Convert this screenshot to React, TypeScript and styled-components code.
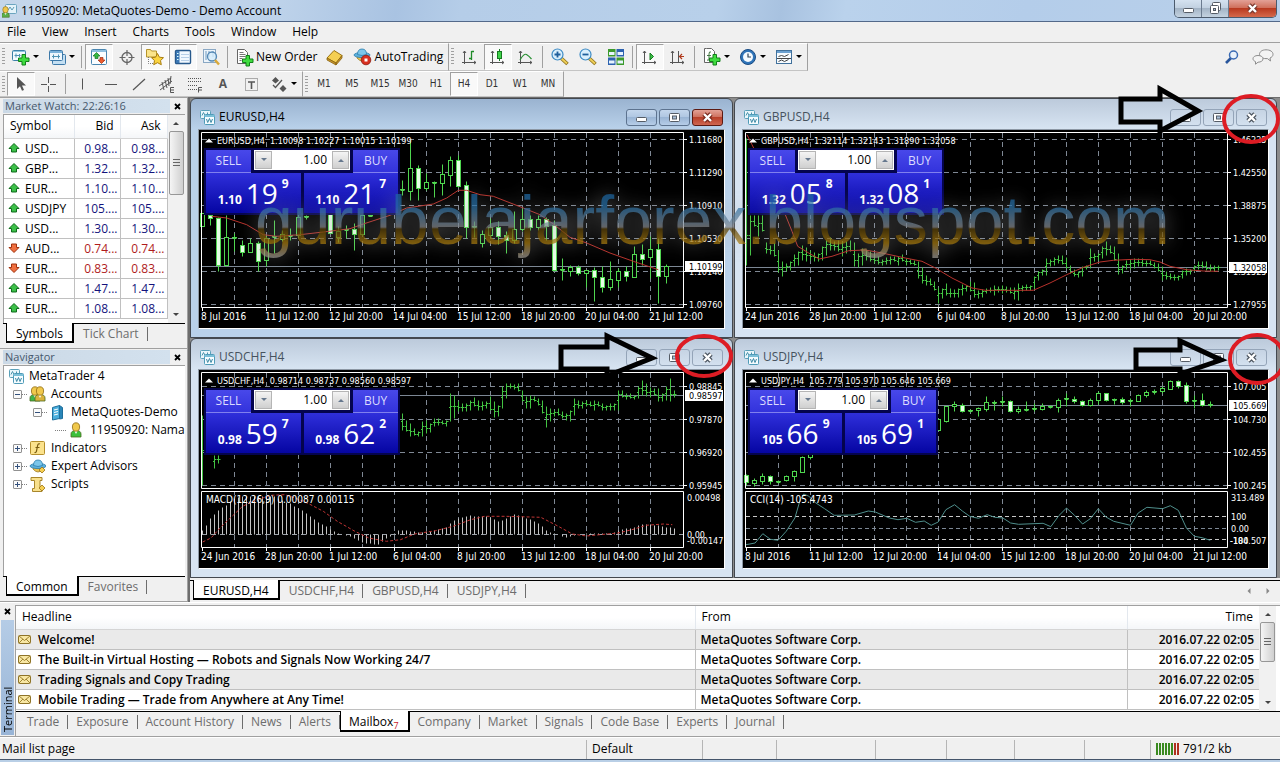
import React from "react";
import styled, { createGlobalStyle, css } from "styled-components";

const ui = `"Open Sans", "Noto Sans", sans-serif`;
const small = `"DejaVu Sans Condensed", "DejaVu Sans", sans-serif`;

const GlobalStyle = createGlobalStyle`
  * { box-sizing: border-box; }
  body { margin: 0; background: #f0f0f0; font: 12px/16px ${ui}; color: #000; }
  button, input { font: inherit; color: inherit; margin: 0; padding: 0; border: 0; background: none; }
  ul { list-style: none; margin: 0; padding: 0; }
  table { border-collapse: collapse; border-spacing: 0; }
  svg { display: block; flex: none; }
`;

/* ---------- frame ---------- */

const Shell = styled.div`
  display: flex;
  flex-direction: column;
  min-height: 100vh;
  position: relative;
  overflow: hidden;
`;

const TitleBar = styled.header`
  display: flex;
  align-items: flex-start;
  height: 22px;
  padding: 0 3px 0 2px;
  border-bottom: 1px solid #53698a;
  background: linear-gradient(100deg, #c4d6ea 0%, #bdd2ea 22%, #a9c3e2 31%, #b5cde8 36%, #b8d0ea 56%, #a8c2e0 61%, #bad2ec 66%, #b4cdea 80%, #b9d0ea 100%);
`;

const AppTitle = styled.h1`
  flex: 1;
  margin: 0 0 0 4px;
  font-size: 12px;
  font-weight: 400;
  line-height: 22px;
`;

const WindowButtons = styled.div`
  display: flex;
  border: 1px solid #4b5a6c;
  border-top: 0;
  border-radius: 0 0 5px 5px;
  overflow: hidden;
`;

const WindowButton = styled.button<{ $close?: boolean }>`
  display: grid;
  place-items: center;
  width: ${(p) => (p.$close ? 47 : 27)}px;
  height: 17px;
  border-right: ${(p) => (p.$close ? 0 : 1)}px solid #6b7b8f;
  background: ${(p) =>
    p.$close
      ? "linear-gradient(#e3a196, #d0705c 45%, #b93a20 50%, #d5694c)"
      : "linear-gradient(#d5e2f0, #c2d1e1 45%, #a3b4c6 50%, #c4d2e0)"};
`;

const MenuBar = styled.nav`
  height: 21px;
  border-bottom: 1px solid #a0a0a0;
  ul { display: flex; padding-left: 7px; gap: 16px; }
  button { line-height: 20px; }
`;

/* ---------- toolbars ---------- */

const Toolbar = styled.div<{ $last?: boolean }>`
  display: flex;
  height: ${(p) => (p.$last ? 26 : 28)}px;
`;

const ToolGroup = styled.div`
  display: flex;
  align-items: stretch;
  padding-right: 1px;
  border-right: 1px solid #a0a0a0;
  border-top: 1px solid #fff;
  border-bottom: 1px solid #c4c4c4;
`;

const Grip = styled.span`
  width: 3px;
  margin: 4px 2px 4px 2px;
  background: repeating-linear-gradient(#a0a0a0 0 1px, transparent 1px 3px);
`;

const Divider = styled.span`
  width: 1px;
  margin: 2px 3px 2px 2px;
  background: #a0a0a0;
`;

const ToolButton = styled.button<{ $on?: boolean; $wide?: boolean; $text?: boolean }>`
  display: flex;
  align-items: center;
  justify-content: center;
  gap: ${(p) => (p.$text ? 1 : 2)}px;
  width: ${(p) => (p.$text ? "auto" : p.$wide ? "36px" : "28px")};
  padding: 0 ${(p) => (p.$text ? 3 : 0)}px;
  border: 1px solid transparent;
  white-space: nowrap;
  ${(p) =>
    p.$on &&
    css`
      border-color: #a0a0a0 #fff #fff #a0a0a0;
      background: #f9f9f9;
    `}
`;

const FrameButton = styled(ToolButton)`
  color: #333;
  font: 10px/14px ${small};
`;

const LetterButton = styled(ToolButton)`
  color: #555;
  font-weight: 700;
`;

const Tray = styled.div`
  display: flex;
  align-items: center;
  gap: 12px;
  margin-left: auto;
  padding-right: 6px;
`;

/* ---------- docks ---------- */

const Body = styled.div`
  display: flex;
  height: 505px;
`;

const Dock = styled.aside`
  display: flex;
  flex-direction: column;
  width: 188px;
  flex: none;
  border-top: 1px solid #a0a0a0;
`;

const Panel = styled.section<{ $fill?: boolean }>`
  display: flex;
  flex-direction: column;
  padding: 1px 2px 3px 3px;
  border-bottom: 1px solid #a0a0a0;
  border-right: 1px solid #a0a0a0;
  height: ${(p) => (p.$fill ? "auto" : "251px")};
  flex: ${(p) => (p.$fill ? 1 : "none")};
  min-height: 0;
`;

const PanelTitle = styled.div`
  display: flex;
  justify-content: space-between;
  align-items: center;
  height: 14px;
  margin-bottom: 1px;
  color: #46586c;
  h2 {
    flex: 1;
    margin: 0;
    padding-left: 2px;
    font-size: 11px;
    font-weight: 400;
    line-height: 14px;
    background: linear-gradient(90deg, #cbd9e6, #d3e1ee);
  }
  button { width: 15px; height: 12px; display: grid; place-items: center; }
`;

const PanelBody = styled.div`
  display: flex;
  flex: 1;
  min-height: 0;
  overflow: hidden;
  background: #fff;
  border-left: 1px solid #a0a0a0;
  border-top: 1px solid #a0a0a0;
`;

const Quotes = styled.table`
  flex: none;
  align-self: flex-start;
  table-layout: fixed;
  width: 163px;
  th {
    height: 23px;
    padding: 0 6px;
    font-weight: 400;
    text-align: right;
    border-bottom: 1px solid #d5d5d5;
    border-right: 1px solid #e3e8ee;
    background: linear-gradient(#fff 50%, #f4f6f8);
  }
  th:first-child { text-align: left; }
  td {
    height: 20px;
    padding: 0 2px;
    text-align: right;
    border-bottom: 1px solid #c0c0c0;
    border-right: 1px solid #c0c0c0;
    line-height: 19px;
  }
  td:first-child { text-align: left; padding-left: 4px; }
  td:first-child span { display: flex; align-items: center; gap: 5px; }
`;

const QuoteRow = styled.tr<{ $up: boolean }>`
  td:not(:first-child) { color: ${(p) => (p.$up ? "#13137c" : "#b01c1c")}; }
`;

const ScrollTrack = styled.div`
  display: flex;
  flex-direction: column;
  align-items: center;
  width: 17px;
  flex: none;
  padding: 5px 0;
  background: #f1f1f1;
`;

const Thumb = styled.div<{ $h: number }>`
  display: grid;
  place-items: center;
  width: 15px;
  height: ${(p) => p.$h}px;
  margin: 5px 0 auto;
  border: 1px solid #979797;
  border-radius: 2px;
  background: linear-gradient(90deg, #f5f5f5, #e2e2e2 50%, #cfcfcf);
`;

const TabStrip = styled.div<{ $tight?: boolean }>`
  display: flex;
  align-items: flex-start;
  height: 22px;
  padding-left: 3px;
  border-top: 1px solid #000;
  background: #f0f0f0;
  --tab-pad: ${(p) => (p.$tight ? 8 : 9)}px;
`;

const Tab = styled.button<{ $on?: boolean }>`
  padding: ${(p) => (p.$on ? 3 : 2)}px 9px ${(p) => (p.$on ? 0 : 2)}px var(--tab-pad);
  margin-top: ${(p) => (p.$on ? -1 : 0)}px;
  line-height: 15px;
  white-space: nowrap;
  color: ${(p) => (p.$on ? "#000" : "#6d6d6d")};
  ${(p) =>
    p.$on
      ? css`
          background: #fff;
          border: solid #000;
          border-width: 0 2px 2px 1px;
        `
      : css`
          background: linear-gradient(#6d6d6d, #6d6d6d) right 3px / 1px 14px no-repeat;
        `}
  sub { color: #c8202a; font-size: 9px; line-height: 9px; vertical-align: -3px; }
`;

const Tree = styled.ul`
  padding: 1px 0 0 5px;
  li { display: flex; align-items: center; height: 18px; white-space: nowrap; gap: 5px; }
`;

const Branch = styled.span<{ $w: number }>`
  display: flex;
  align-items: center;
  justify-content: flex-end;
  width: ${(p) => p.$w}px;
  height: 18px;
  margin-right: -3px;
  i { width: 5px; border-top: 1px dotted #808080; }
  i.long { width: 11px; }
`;

const Expander = styled.button`
  display: grid;
  place-items: center;
  width: 9px;
  height: 9px;
  border: 1px solid #919191;
  border-radius: 1px;
  background: #fafafa;
`;

/* ---------- chart windows ---------- */

const Workspace = styled.main`
  display: flex;
  flex-direction: column;
  flex: 1;
  min-width: 0;
  border-left: 2px solid #6d6d6d;
  border-top: 1px solid #6d6d6d;
  position: relative;
`;

const WindowGrid = styled.div`
  display: grid;
  grid-template-columns: 1fr 1fr;
  grid-auto-rows: 240px;
  column-gap: 1px;
  padding-right: 3px;
  margin-bottom: 2px;
  background: #8c8c8c;
`;

const ChartWindow = styled.section<{ $active?: boolean }>`
  position: relative;
  display: flex;
  flex-direction: column;
  min-width: 0;
  padding: 0 7px 8px;
  border: 1px solid #43484f;
  border-radius: 6px 6px 0 0;
  background: ${(p) =>
    p.$active ? "linear-gradient(#9ab3d0, #b9d1ea 30px)" : "linear-gradient(#bccadb, #d7e4f2 30px)"};
`;

const WindowHead = styled.div<{ $active?: boolean }>`
  display: flex;
  align-items: center;
  height: 30px;
  padding: 6px 2px 0 2px;
  color: ${(p) => (p.$active ? "#000" : "#46525e")};
  h3 { flex: 1; margin: 0 0 0 4px; font-size: 12px; font-weight: 400; }
`;

const HeadButton = styled.button<{ $tone?: "red" | "blue" }>`
  display: grid;
  place-items: center;
  width: 31px;
  height: 17px;
  margin-left: 2px;
  border: 1px solid ${(p) => (p.$tone === "red" ? "#5c1a12" : p.$tone ? "#5d738f" : "#94a4b8")};
  border-radius: 3px;
  background: ${(p) =>
    p.$tone === "red"
      ? "linear-gradient(#e3a196, #cf7361 45%, #b8402a 50%, #cf6650)"
      : p.$tone
      ? "linear-gradient(#c3d6ec, #b0c7e2 45%, #9ab5d5 50%, #b6cde8)"
      : "transparent"};
`;

const Client = styled.div`
  position: relative;
  flex: 1;
  overflow: hidden;
  background: #000;
  border: 1px solid #8d98a5;
  border-right-color: #fff;
  border-bottom-color: #fff;
`;

const TradePanel = styled.div<{ $w: number }>`
  position: absolute;
  left: 5px;
  top: 18px;
  width: ${(p) => p.$w}px;
  padding: 2px;
  background: #04044e;
`;

const TradeTop = styled.div`
  display: grid;
  grid-template-columns: 45px 1fr 45px;
  gap: 3px;
`;

const Side = styled.button`
  height: 23px;
  color: #dcdcff;
  line-height: 20px;
  border-bottom: 1px solid #8080ee;
  background: linear-gradient(#4848ea, #3333dc);
`;

const Volume = styled.div`
  display: grid;
  grid-template-columns: 19px 1fr 19px;
  height: 20px;
  background: #fff;
  button { display: grid; place-items: center; margin: 1px; background: linear-gradient(#f4f4f4, #cfcfcf); border: 1px solid #b5b5b5; }
  input { width: 100%; text-align: right; padding-right: 4px; font-size: 12px; outline: 0; }
`;

const Prices = styled.div`
  display: grid;
  grid-template-columns: 1fr 1fr;
  gap: 3px;
`;

const Price = styled.button`
  display: flex;
  justify-content: center;
  align-items: baseline;
  gap: 4px;
  height: 40px;
  color: #fff;
  font-size: 12px;
  line-height: 40px;
  background: linear-gradient(#2f2fdb, #0505a2);
  strong { font-size: 28px; font-weight: 400; }
  sup { font-size: 12px; font-weight: 700; line-height: 1; align-self: flex-start; padding-top: 5px; }
  b { font-weight: 700; }
`;

const Callout = styled.svg`
  position: absolute;
  z-index: 3;
  right: 0;
  top: 0;
  overflow: visible;
  pointer-events: none;
`;

const Watermark = styled.div`
  position: absolute;
  z-index: 2;
  left: 65px;
  top: 84px;
  font: 68px/76px "Liberation Sans", Arial, sans-serif;
  color: transparent;
  background: linear-gradient(#1f66a0 10px, #2d72a6 24px, #7c8792 43px, #85868a 45px, #5a430c 47px, #a87c12 61px, #9c8450 67px, #9a968e 75px);
  background-clip: text;
  -webkit-background-clip: text;
  opacity: 0.74;
  filter: drop-shadow(0 0 10px rgba(170, 170, 170, 0.75));
  pointer-events: none;
  white-space: nowrap;
`;

const ScrollArrows = styled.div`
  display: flex;
  gap: 13px;
  margin: 7px 9px 0 auto;
`;

/* ---------- terminal ---------- */

const Terminal = styled.section`
  display: flex;
  height: 135px;
  border-top: 1px solid #fff;
  border-bottom: 1px solid #a0a0a0;
`;

const TerminalSide = styled.div`
  display: flex;
  flex-direction: column;
  width: 15px;
  flex: none;
  padding: 2px 1px 1px;
  button { height: 12px; margin-bottom: 3px; display: grid; place-items: center; }
  h2 {
    flex: 1;
    width: 13px;
    margin: 0;
    padding-top: 3px;
    font-size: 11px;
    font-weight: 400;
    line-height: 13px;
    writing-mode: vertical-rl;
    transform: rotate(180deg);
    background: linear-gradient(#98b4d6, #b5cce6);
  }
`;

const TerminalMain = styled.div`
  flex: 1;
  min-width: 0;
  display: flex;
  flex-direction: column;
  margin-top: 2px;
  border-left: 1px solid #a0a0a0;
  border-top: 1px solid #a0a0a0;
`;

const MailArea = styled.div`
  display: flex;
  height: 105px;
  padding-right: 4px;
  background: #fff;
  overflow: hidden;
`;

const Mail = styled.table`
  flex: 1;
  align-self: flex-start;
  table-layout: fixed;
  width: 100%;
  th {
    height: 23px;
    padding: 0 6px;
    text-align: left;
    font-weight: 400;
    border-bottom: 1px solid #d5d5d5;
    border-right: 1px solid #e3e8ee;
    background: linear-gradient(#fff 50%, #f4f6f8);
  }
  td {
    height: 20px;
    padding: 0 5px;
    font-weight: 600;
    line-height: 19px;
    border-bottom: 1px solid #c0c0c0;
    border-right: 1px solid #c0c0c0;
    white-space: nowrap;
  }
  td:first-child { padding-left: 2px; }
  td span { display: flex; align-items: center; gap: 7px; }
  th:last-child, td:last-child { text-align: right; border-right: 0; }
  tbody tr:nth-child(odd) { background: #eaeaea; }
`;

const Status = styled.footer`
  display: flex;
  align-items: center;
  height: 25px;
  border-top: 1px solid #fff;
  border-bottom: 2px solid #b9cfe6;
  box-shadow: inset 0 -1px #44546a;
`;

const StatusCell = styled.span<{ $w?: number }>`
  display: flex;
  align-items: center;
  gap: 3px;
  height: 19px;
  width: ${(p) => (p.$w ? p.$w + "px" : "auto")};
  flex: ${(p) => (p.$w ? "none" : 1)};
  padding-left: 5px;
  white-space: nowrap;
  & + & { border-left: 1px solid #b5b5b5; }
  &:first-child { padding-left: 2px; }
`;

/* ---------- glyphs ---------- */

const Caret = ({ dir = "down", fill = "#000" }: { dir?: string; fill?: string }) => {
  const d: Record<string, string> = {
    down: "M0 1h6L3 4z",
    up: "M0 5h6L3 2z",
    left: "M4.500 0v6L1.500 3z",
    right: "M1.500 0v6L4.500 3z",
  };
  return (
    <svg width="6" height="6" viewBox="0 0 6 6">
      <path d={d[dir]} fill={fill} />
    </svg>
  );
};

const Cross = () => (
  <svg width="7" height="7" viewBox="0 0 7 7">
    <path d="M1 1l5 5M6 1L1 6" stroke="#000" strokeWidth="1.8" />
  </svg>
);

const MinGlyph = () => (
  <svg width="13" height="11" viewBox="0 0 13 11">
    <rect x="1.500" y="5.500" width="10" height="4" rx="1" fill="#fff" stroke="#555c66" />
  </svg>
);
const MaxGlyph = () => (
  <svg width="13" height="11" viewBox="0 0 13 11">
    <rect x="1.500" y="1.500" width="10" height="8" rx="1" fill="#fff" stroke="#555c66" />
    <rect x="4.500" y="4" width="4" height="3" fill="#a9bfd8" stroke="#555c66" />
  </svg>
);
const RestoreGlyph = () => (
  <svg width="13" height="13" viewBox="0 0 13 13">
    <rect x="3.500" y=".5" width="8" height="8" rx="1" fill="#fff" stroke="#555c66" />
    <rect x="1.500" y="3.500" width="8" height="8" rx="1" fill="#fff" stroke="#555c66" />
    <rect x="4.500" y="6.500" width="2" height="2" fill="#a9bfd8" stroke="#555c66" />
  </svg>
);
const CloseGlyph = ({ edge = "#4c5560" }: { edge?: string }) => (
  <svg width="13" height="11" viewBox="0 0 13 11">
    <path d="M3 2l7 7M10 2l-7 7" stroke={edge} strokeWidth="4.600" />
    <path d="M3 2l7 7M10 2l-7 7" stroke="#fff" strokeWidth="2.400" />
  </svg>
);

const ChartIcon = () => (
  <svg width="15" height="15" viewBox="0 0 15 15">
    <rect x=".5" y=".5" width="10" height="8" rx="1" fill="#e9f6fb" stroke="#5aa0b8" />
    <path d="M2 5.500l1.500-3 1.500 3M7.500 2.500v3" stroke="#4a93ab" fill="none" />
    <rect x="4.500" y="4.500" width="10" height="10" rx="1" fill="#f5fcff" stroke="#4f9bb8" />
    <path d="M4.500 6h10" stroke="#7cc0d8" strokeWidth="2" />
    <path d="M6.500 9l1.200 3.500L9.500 8.500l1.500 4L12.500 9" stroke="#3d89a5" fill="none" />
  </svg>
);

const I = ({ children }: { children: React.ReactNode }) => (
  <svg width="20" height="20" viewBox="0 0 20 20" fill="none">
    {children}
  </svg>
);

const Plus = ({ x, y }: { x: number; y: number }) => (
  <path
    transform={`translate(${x} ${y})`}
    d="M4 .5h3.500V4H11v3.500H7.500V11H4V7.500H.5V4H4z"
    fill="#3fdc3f"
    stroke="#12801a"
  />
);

const Person = ({ c = "#3fb54a", x = 0 }: { c?: string; x?: number }) => (
  <g transform={`translate(${x} 0)`}>
    <path d="M1 15v-3q0-3.500 5-3.500T11 12v3z" fill={c} stroke="#4a6b1e" strokeWidth=".8" />
    <path d="M4.500 9l1.500 3 1.500-3z" fill="#fff" />
    <ellipse cx="6" cy="5" rx="3.600" ry="4.200" fill="#f0c84c" stroke="#8d6a14" strokeWidth=".8" />
  </g>
);

const Advisor = () => (
  <>
    <path d="M4 11q5 6 10 0v-2H4z" fill="#e9c251" stroke="#a07a1c" strokeWidth=".8" />
    <ellipse cx="9" cy="8" rx="8" ry="2.600" fill="#5db0dc" stroke="#2b7dac" strokeWidth=".8" />
    <path d="M4.500 7.500q0-5.500 4.500-5.500T13.500 7.500q-4.500 2-9 0z" fill="#7cc6ea" stroke="#2b7dac" strokeWidth=".8" />
  </>
);

const Lens = ({ minus }: { minus?: boolean }) => (
  <I>
    <path d="M11 11l6.500 6" stroke="#8f741e" strokeWidth="3.600" />
    <path d="M11.500 11.500l5.500 5" stroke="#f0cf58" strokeWidth="1.800" />
    <circle cx="7.500" cy="7.500" r="5.500" fill="#d8eefc" stroke="#3c8ac4" strokeWidth="1.200" />
    <path d={minus ? "M4.500 7.500h6" : "M4.500 7.500h6M7.500 4.500v6"} stroke="#1f5f9c" strokeWidth="1.800" />
  </I>
);

const Axes = ({ children }: { children?: React.ReactNode }) => (
  <I>
    <path d="M4.500 4v13M2 15.500h14M3 6l1.500-2L6 6M14 14l2 1.500-2 1.500" stroke="#555" />
    {children}
  </I>
);

const icons = {
  newChart: (
    <I>
      <rect x="1.500" y="3.500" width="13" height="10" rx="1" fill="#f2faff" stroke="#3c80a8" />
      <path d="M2 4.500h12" stroke="#8fc4de" />
      <path d="M3.500 8.500h6M5 6.500v4M8.500 7v3" stroke="#4f93b4" />
      <Plus x={7} y={7} />
    </I>
  ),
  profiles: (
    <I>
      <rect x="5.500" y="7.500" width="13" height="10" rx="1" fill="#c4dff2" stroke="#3c78a8" />
      <rect x="2.500" y="3.500" width="13" height="10" rx="1" fill="#eef7fd" stroke="#3c78a8" />
      <path d="M3 5h12" stroke="#7ab2da" strokeWidth="2" />
      <path d="M5 9.500h8M6.500 7.500v4M11.500 7.500v4" stroke="#4f93b4" />
    </I>
  ),
  market: (
    <I>
      <rect x="2.500" y="2.500" width="15" height="15" rx="1" fill="#fafdff" stroke="#4a86b0" />
      <path d="M3 4h14" stroke="#8fc0e0" strokeWidth="2" />
      <path d="M7.500 5.500L11 9H9v2.500H6V9H4z" fill="#33b83f" stroke="#197225" strokeWidth=".7" />
      <path d="M12.500 16.500L9 13h2v-2.500h3V13h2z" fill="#ec5c30" stroke="#9b2d10" strokeWidth=".7" />
    </I>
  ),
  target: (
    <I>
      <circle cx="10" cy="10.500" r="5" stroke="#666" strokeWidth="1.300" />
      <path d="M10 3v6M10 12v6M2.500 10.500h6M11.500 10.500h6" stroke="#666" strokeWidth="1.200" />
    </I>
  ),
  star: (
    <I>
      <path d="M1.500 2.500h4l1 1.500h5v6h-10z" fill="#fbe48a" stroke="#b5942c" />
      <path d="M3.500 10v6.500H8" stroke="#777" strokeDasharray="1 1" />
      <path d="M12.500 6.500l1.900 3.700 4.100.5-3 2.900.8 4.100-3.800-2-3.800 2 .8-4.100-3-2.900 4.100-.5z" fill="#fbd440" stroke="#a87d10" />
    </I>
  ),
  terminal: (
    <I>
      <rect x="2.500" y="3.500" width="15" height="13" rx="1" fill="#f2f9ff" stroke="#27598c" strokeWidth="1.400" />
      <path d="M3 4h3.500v12H3z" fill="#3c78b4" />
      <path d="M4 6.500h1.500M4 9.500h1.500M4 12.500h1.500" stroke="#dff" />
      <path d="M8 7.500h8M8 10.500h8M8 13.500h8" stroke="#b8d0e8" />
    </I>
  ),
  tester: (
    <I>
      <rect x="2.500" y="2.500" width="12" height="13" fill="#eef5fb" stroke="#8aa8c4" />
      <path d="M5 4v9M8 4v6M12 4v6" stroke="#6d9ac0" />
      <circle cx="11" cy="9.500" r="4.500" fill="#d5ecfb" fillOpacity=".8" stroke="#5488b4" strokeWidth="1.300" />
      <path d="M14 13l4 4.500" stroke="#d9a93a" strokeWidth="2.500" />
    </I>
  ),
  order: (
    <I>
      <path d="M2.500 2.500h7l3 3v11h-10z" fill="#fff" stroke="#666" />
      <path d="M4.500 5.500h4M4.500 7.500h6M4.500 9.500h6M4.500 11.500h3M4.500 13.500h2" stroke="#777" />
      <Plus x={7} y={8} />
    </I>
  ),
  book: (
    <I>
      <path d="M2 11l7-7.500 8 5-6 7.500z" fill="#f5cf52" stroke="#9c7414" />
      <path d="M2 11v2l9 5v-2zM11 16v2l6-7V8.500z" fill="#c8952a" stroke="#8a6410" strokeWidth=".8" />
    </I>
  ),
  auto: (
    <I>
      <Advisor />
      <circle cx="13" cy="13" r="4.800" fill="#d83020" stroke="#8c1a10" strokeWidth=".8" />
      <rect x="11.500" y="11.500" width="3" height="3" fill="#fff" />
    </I>
  ),
  bars: (
    <Axes>
      <path d="M11.500 4v9M11.500 4.500H14M9 11.500h2.500" stroke="#1e8a28" strokeWidth="1.300" />
    </Axes>
  ),
  candles: (
    <Axes>
      <path d="M11.500 2v12" stroke="#167a20" />
      <rect x="9.500" y="4.500" width="4" height="7" fill="#3fd24a" stroke="#167a20" />
    </Axes>
  ),
  line: (
    <Axes>
      <path d="M4 13q4-7 6.500-5.500T15.500 12" stroke="#2a9034" strokeWidth="1.200" />
    </Axes>
  ),
  tile: (
    <I>
      <rect x="2" y="2" width="7.500" height="7.500" fill="#3c9a2c" />
      <rect x="10.500" y="2" width="7.500" height="7.500" fill="#2c62b0" />
      <rect x="2" y="10.500" width="7.500" height="7.500" fill="#2c62b0" />
      <rect x="10.500" y="10.500" width="7.500" height="7.500" fill="#3c9a2c" />
      <path d="M3 6.500h5.500M11.500 6.500h5.500M3 15h5.500M11.500 15h5.500" stroke="#e8f4ff" strokeWidth="3" />
    </I>
  ),
  scroll: (
    <Axes>
      <path d="M10 6v7l3.500-3.500z" fill="#3cc048" stroke="#167a20" />
    </Axes>
  ),
  shift: (
    <Axes>
      <path d="M10.500 4v11" stroke="#555" />
      <path d="M16 9.500h-4M14 7l-2.500 2.500L14 12" stroke="#b03a1c" strokeWidth="1.200" />
    </Axes>
  ),
  indicators: (
    <I>
      <path d="M4.500 1.500h-2v14h10v-11l-3-3z" fill="#fff" stroke="#666" />
      <path d="M9 5q-2-1-2 2v5q0 2-2 1M5 8.500h4" stroke="#447744" />
      <Plus x={7} y={7} />
    </I>
  ),
  clock: (
    <I>
      <circle cx="10" cy="10" r="7.500" fill="#2f74b8" stroke="#1a4c84" />
      <circle cx="10" cy="10" r="5" fill="#f4faff" />
      <path d="M10 6.500V10h3" stroke="#345" strokeWidth="1.200" />
    </I>
  ),
  template: (
    <I>
      <rect x="2.500" y="3.500" width="15" height="13" fill="#f6fbff" stroke="#41719c" />
      <path d="M3 5h14" stroke="#6aa0d0" strokeWidth="2" />
      <path d="M4.500 9.500l3-1 3 1 4-2M4.500 14.500l3-1.500 3 1.500 4-2M3 11.500h14" stroke="#444" />
    </I>
  ),
  cursor: (
    <I>
      <path d="M6 3v12l3-2.800 2 4.600 2-.9-2-4.500h4z" fill="#555" />
    </I>
  ),
  crosshair: (
    <I>
      <path d="M9.500 3v6M9.500 12v6M2 10.500h6M11 10.500h6" stroke="#555" />
    </I>
  ),
  vline: (
    <I>
      <path d="M9.500 4.500v11" stroke="#555" />
    </I>
  ),
  hline: (
    <I>
      <path d="M4 10.500h12" stroke="#555" />
    </I>
  ),
  trend: (
    <I>
      <path d="M4 16L16 5" stroke="#555" strokeWidth="1.200" />
    </I>
  ),
  channel: (
    <I>
      <path d="M2 12L14 4M3 16l12-9M5 8l2 8M8 6l2 8M11 4l1 8M14 2l-1 8" stroke="#555" />
      <path d="M17 13.500h-3.500v5H17M13.500 16H17" stroke="#555" />
    </I>
  ),
  fibo: (
    <I>
      <path d="M3 4.500h14M3 7.500h14M3 11.500h10M3 15.500h9" stroke="#555" strokeDasharray="1 1" />
      <path d="M17 13.500h-3.500v5M13.500 16H17" stroke="#555" />
    </I>
  ),
  label: (
    <I>
      <rect x="4.500" y="4.500" width="12" height="12" stroke="#666" strokeDasharray="1 1" />
      <path d="M7 8h7M10.500 8v7" stroke="#555" strokeWidth="1.600" />
    </I>
  ),
  arrows: (
    <I>
      <path d="M6.500 3l3.500 3.500-3.500 3L3 6.500zM14 11l3.500 3.500L14 18l-3.500-3.500z" fill="#555" />
      <path d="M4 11l2.500 2.500L13 6" stroke="#555" strokeWidth="1.300" />
    </I>
  ),
};

const SearchIcon = () => (
  <svg width="16" height="16" viewBox="0 0 16 16" fill="none">
    <path d="M2 14l5-5" stroke="#28559c" strokeWidth="2.600" />
    <circle cx="9.500" cy="6" r="4" fill="#eaf2fb" stroke="#3a6ab4" strokeWidth="1.500" />
  </svg>
);
const ChatIcon = () => (
  <svg width="22" height="16" viewBox="0 0 22 16" fill="#f4f4f4" stroke="#8c8c8c">
    <path d="M14 .8c4 0 7 1.800 7 4.500 0 1.700-1.200 3-3 3.700l.5 3-3-2.400H14c-4 0-6.500-1.800-6.500-4.300S10 .8 14 .8z" />
    <path d="M6 6.500c3 0 5 1.300 5 3.300s-2 3.400-5 3.400l-2.500 2V12.600C2 12 1 11 1 9.800c0-2 2-3.300 5-3.300z" />
  </svg>
);

const QuoteArrow = ({ up }: { up: boolean }) => (
  <svg width="12" height="12" viewBox="0 0 12 12">
    <path
      d={up ? "M6 1.500l5 5H8.500V10h-5V6.500H1z" : "M6 10.500l-5-5h2.500V2h5v3.500H11z"}
      fill={up ? "#3cc048" : "#f07040"}
      stroke={up ? "#0f6b1c" : "#a0320e"}
    />
  </svg>
);

const Envelope = () => (
  <svg width="13" height="11" viewBox="0 0 13 11">
    <rect x=".5" y="1.500" width="12" height="8" rx="1" fill="#f8e7a4" stroke="#8f7428" />
    <path d="M1 2l5.500 4.500L12 2M1 9l4-4M12 9L8 5" fill="none" stroke="#a08430" />
  </svg>
);

const Grooves = () => (
  <svg width="7" height="8" viewBox="0 0 7 8">
    <path d="M0 .5h7M0 3.500h7M0 6.500h7" stroke="#666" />
  </svg>
);

const TreeGlyph = ({ children }: { children: React.ReactNode }) => (
  <svg width="17" height="17" viewBox="0 0 17 17" fill="none">
    {children}
  </svg>
);

/* ---------- charts ---------- */

type Candle = [number, number, number, number, number]; // wick top, body top, body bottom, wick bottom, filled
type Pt = [number, number];
type Series = {
  candles?: Record<number, Candle>;
  bars?: Record<number, Pt>;
};

// Values are stored in thirds of a pixel from the window's top edge.
const py = (v: number) => Math.round(v / 3 - 32) + 0.5;
const px = (i: number, step: number) => 3.5 + i * step;

const rows = <T,>(start: number, list: T[]) => Object.fromEntries(list.map((c, i) => [start + i, c])) as Record<number, T>;

const eurusd: Record<number, Candle> = {
  ...rows<Candle>(0, [
    [345, 345, 383, 384, 0], [350, 350, 361, 380, 1], [357, 361, 500, 520, 1], [350, 417, 500, 505, 0],
    [405, 418, 424, 460, 1], [425, 441, 462, 475, 1], [420, 436, 462, 462, 0], [430, 436, 488, 518, 1],
    [410, 420, 486, 505, 0], [365, 415, 421, 465, 0], [395, 408, 424, 430, 0], [390, 410, 413, 425, 1],
    [350, 357, 412, 420, 0], [350, 354, 358, 364, 1],
  ]),
  ...rows<Candle>(16, [
    [340, 345, 404, 405, 1], [385, 398, 417, 432, 0], [380, 394, 398, 420, 1], [375, 394, 408, 455, 1],
    [345, 350, 408, 415, 0], [340, 350, 353, 354, 1],
  ]),
  ...rows<Candle>(25, [
    [245, 272, 277, 292, 1], [130, 210, 278, 305, 0], [200, 210, 269, 305, 1], [225, 252, 270, 275, 0],
    [250, 252, 257, 297, 1], [198, 228, 254, 290, 0], [175, 187, 230, 265, 0], [170, 187, 263, 268, 1],
    [250, 262, 388, 420, 1], [370, 383, 388, 418, 1], [395, 408, 436, 447, 0], [360, 388, 410, 420, 0],
    [370, 387, 413, 437, 1], [400, 412, 425, 465, 1], [340, 393, 425, 435, 0], [330, 363, 393, 398, 0],
    [350, 362, 388, 397, 1], [350, 362, 388, 397, 0], [358, 362, 383, 425, 1], [365, 381, 515, 520, 1],
    [480, 514, 520, 545, 1], [500, 506, 520, 535, 0], [500, 506, 525, 530, 1], [515, 516, 525, 568, 0],
    [508, 516, 538, 608, 1], [505, 537, 568, 583, 1], [490, 543, 567, 575, 0], [510, 520, 545, 567, 0],
    [503, 520, 535, 550, 1], [445, 468, 537, 537, 0], [437, 468, 482, 500, 1], [415, 453, 478, 540, 0],
    [420, 453, 533, 615, 1], [498, 505, 533, 555, 0],
  ]),
};

const usdjpy: Record<number, Candle> = {
  ...rows<Candle>(0, [
    [408, 412, 433, 440, 1], [420, 427, 434, 443, 0], [405, 413, 430, 437, 0], [410, 413, 430, 438, 1],
    [425, 430, 433, 435, 1], [410, 415, 425, 430, 0], [395, 400, 415, 430, 0], [355, 357, 402, 402, 0],
    [345, 348, 358, 362, 0],
  ]),
  ...rows<Candle>(24, [
    [243, 243, 275, 275, 0], [203, 205, 248, 253, 0], [190, 198, 205, 220, 0], [195, 200, 220, 223, 1],
    [213, 217, 220, 222, 1], [207, 210, 217, 235, 0], [175, 193, 213, 218, 0], [185, 192, 194, 215, 1],
    [175, 188, 191, 205, 1], [185, 188, 220, 223, 1], [205, 213, 220, 225, 0], [190, 213, 216, 220, 1],
    [195, 211, 213, 220, 1], [195, 203, 212, 217, 0], [200, 203, 208, 210, 1], [180, 185, 208, 222, 0],
    [165, 180, 183, 205, 1], [175, 182, 190, 195, 1], [185, 190, 202, 205, 1], [180, 185, 200, 203, 0],
    [158, 165, 187, 197, 0], [165, 165, 185, 190, 1], [180, 183, 186, 197, 1], [178, 183, 192, 198, 1],
    [180, 187, 192, 205, 0], [168, 170, 188, 190, 0], [155, 163, 170, 178, 0], [153, 160, 162, 168, 1],
    [145, 150, 160, 165, 0], [126, 128, 152, 153, 0], [125, 130, 143, 150, 1], [133, 142, 190, 195, 1],
    [170, 186, 190, 210, 1], [165, 187, 200, 205, 1], [190, 198, 202, 207, 1],
  ]),
};

const gbpusd = rows<Pt>(0, [
  [120, 500], [352, 470], [350, 385], [350, 415], [350, 400], [432, 465], [440, 468], [435, 475], [455, 522], [490, 533],
  [495, 520], [490, 515], [468, 505], [460, 502], [440, 485], [448, 490], [455, 485], [462, 488], [465, 488], [445, 485],
  [425, 470], [418, 455], [428, 455], [425, 460], [430, 475], [430, 465], [425, 460], [432, 505], [465, 508], [450, 500],
  [455, 485], [460, 490], [468, 495], [475, 498], [482, 500], [478, 498], [475, 497], [475, 490], [475, 500], [468, 490],
  [480, 500], [482, 498], [485, 502], [490, 540], [508, 555], [530, 562], [540, 560], [550, 575], [568, 615], [570, 600],
  [555, 590], [570, 598], [572, 598], [570, 597], [558, 590], [560, 580], [548, 578], [552, 598], [575, 600], [572, 598],
  [570, 585], [568, 582], [560, 590], [565, 582], [560, 585], [565, 583], [568, 585], [568, 602], [555, 605], [560, 578],
  [558, 575], [560, 575], [535, 570], [518, 545], [512, 530], [480, 530], [482, 505], [478, 502], [470, 495], [472, 498],
  [478, 510], [500, 525], [512, 535], [520, 538], [505, 535], [500, 512], [450, 510], [465, 490], [465, 485], [445, 480],
  [430, 470], [440, 465], [445, 485], [465, 528], [500, 525], [485, 512], [482, 512], [480, 510], [480, 505], [480, 505],
  [485, 505], [487, 500], [492, 510], [495, 520], [505, 545], [520, 542], [525, 542], [528, 545], [530, 545], [515, 540],
  [510, 530], [512, 528], [500, 520], [488, 512], [490, 510], [490, 515], [498, 520], [500, 518], [500, 515],
]);

const usdchf: Record<number, Pt> = {
  0: [230, 440],
  3: [350, 390],
  4: [350, 375],
  ...rows<Pt>(50, [
    [225, 275], [245, 280], [255, 295], [270, 290], [280, 293], [250, 293], [245, 285], [255, 282], [240, 265], [240, 262],
    [245, 258], [245, 265], [165, 250], [170, 240], [190, 218], [195, 218], [195, 218], [185, 215], [178, 205], [185, 215],
    [190, 215], [190, 210], [175, 215], [190, 238], [200, 235], [145, 210], [135, 180], [135, 150], [138, 152], [135, 160],
    [155, 190], [175, 210], [170, 210], [175, 190], [180, 200], [185, 225], [205, 268], [210, 248], [215, 235], [210, 232],
    [220, 240], [225, 245], [215, 248], [180, 230], [185, 210], [190, 210], [185, 205], [190, 205], [185, 215], [190, 205],
    [195, 215], [200, 215], [195, 215], [195, 215], [155, 215], [155, 178], [165, 182], [165, 180], [170, 182], [145, 180],
    [125, 172], [135, 175], [148, 178], [150, 170], [150, 190], [165, 190], [145, 185], [120, 188], [155, 178],
  ]),
};

const eurMa: Pt[] = [
  [65, 355], [110, 360], [170, 380], [220, 410], [260, 415], [330, 410], [400, 402], [480, 392], [520, 378], [600, 352],
  [650, 330], [730, 318], [770, 300], [805, 277], [830, 277], [870, 290], [910, 295], [1000, 330], [1050, 350], [1093, 380],
  [1140, 418], [1190, 435], [1260, 465], [1330, 490], [1405, 515],
];
const gbpMa: Pt[] = [
  [45, 110], [60, 140], [100, 220], [160, 350], [180, 400], [197, 445], [230, 465], [262, 483], [300, 475], [350, 458],
  [400, 456], [450, 465], [520, 480], [570, 490], [610, 510], [660, 540], [720, 570], [760, 577], [904, 577], [954, 555],
  [1004, 530], [1054, 508], [1104, 492], [1144, 487], [1204, 484], [1254, 485], [1284, 492], [1314, 505], [1364, 515],
  [1414, 519], [1459, 520],
];
const macdTop: Pt[] = [
  [36, 575], [47, 562], [58, 540], [81, 515], [104, 500], [127, 480], [150, 475], [240, 475], [262, 485], [285, 495],
  [310, 510], [340, 530], [365, 550], [400, 572], [415, 582], [440, 588], [455, 593], [480, 605], [500, 615], [540, 618],
  [560, 600], [580, 590], [590, 577], [620, 577], [660, 582], [700, 575], [730, 568], [745, 552], [770, 538], [800, 532],
  [850, 535], [880, 550], [900, 540], [925, 527], [950, 535], [980, 548], [1000, 560], [1020, 580], [1050, 588],
  [1075, 598], [1100, 590], [1140, 585], [1200, 585], [1225, 575], [1260, 568], [1290, 558], [1310, 558], [1340, 562],
  [1380, 570],
];
const macdSignal: Pt[] = [
  [36, 612], [60, 600], [90, 565], [115, 540], [150, 505], [180, 490], [230, 472], [270, 470], [300, 480], [340, 498],
  [380, 520], [420, 550], [470, 580], [510, 600], [560, 610], [600, 605], [640, 588], [700, 578], [750, 565], [800, 545],
  [840, 535], [900, 535], [1000, 538], [1050, 565], [1090, 588], [1130, 594], [1220, 585], [1260, 575], [1300, 562],
  [1350, 558], [1375, 560],
];
const cci: Pt[] = [
  [40, 620], [66, 615], [88, 587], [110, 604], [132, 607], [155, 580], [180, 540], [195, 485], [205, 468], [220, 475],
  [240, 495], [265, 512], [292, 532], [350, 531], [390, 519], [410, 522], [450, 540], [475, 545], [500, 541], [525, 553],
  [550, 549], [570, 562], [590, 552], [612, 515], [637, 500], [660, 520], [680, 535], [705, 541], [730, 530], [752, 538],
  [775, 540], [797, 555], [820, 559], [890, 556], [912, 566], [935, 533], [957, 510], [980, 532], [1003, 558],
  [1025, 542], [1048, 512], [1070, 537], [1092, 550], [1140, 562], [1162, 525], [1187, 508], [1232, 512], [1254, 503],
  [1277, 517], [1300, 570], [1323, 595], [1345, 599], [1368, 607],
];

const line = (pts: Pt[], scale: number, off: number) =>
  pts.map(([x, y]) => `${(x / scale - off).toFixed(1)},${(y / 3 - 32).toFixed(1)}`).join(" ");

const at = (pts: Pt[], x: number) => {
  const k = pts.findIndex((p) => p[0] >= x);
  if (k <= 0) return pts[k === 0 ? 0 : pts.length - 1][1];
  const [a, b] = [pts[k - 1], pts[k]];
  return a[1] + ((b[1] - a[1]) * (x - a[0])) / (b[0] - a[0]);
};

const Candles = ({ data }: { data: Record<number, Candle> }) => (
  <g stroke="#4fd64f">
    {Object.entries(data).map(([i, [wt, bt, bb, wb, fill]]) => {
      const x = px(+i, 8);
      const doji = bb - bt < 7;
      return (
        <g key={i}>
          <path d={`M${x} ${py(wt)}V${py(wb)}`} />
          {doji ? (
            <path d={`M${x - 2.5} ${py(bt)}h5M${x - 2} ${py(bt) + 1}h4`} />
          ) : (
            <rect x={x - 2} y={py(bt)} width="4" height={py(bb) - py(bt)} fill={fill ? "#e6ffe6" : "#000"} />
          )}
        </g>
      );
    })}
  </g>
);

const Bars = ({ data }: { data: Record<number, Pt> }) => (
  <g stroke="#43c443">
    {Object.entries(data).map(([i, [hi, lo]]) => {
      const x = px(+i, 4);
      const next = data[+i + 1] ?? [hi, lo];
      const close = Math.max(hi + 3, Math.min(lo - 3, (next[0] + next[1]) / 2));
      return <path key={i} d={`M${x} ${py(hi)}V${py(lo)}M${x} ${py(close)}h2M${x - 1.5} ${py((hi + lo) / 2)}h1.500`} />;
    })}
  </g>
);

type ChartProps = {
  head: string;
  dates: string[];
  grid: [number, string][];
  last: [number, string];
  series: Series;
  ma?: Pt[];
  split?: "macd" | "cci";
};

const ChartSvg = styled.svg`
  font: 9px ${small};
  fill: #fff;
  .wide { font-size: 10px; }
`;

const Chart = ({ head, dates, grid, last, series, ma, split }: ChartProps) => {
  const mainBottom = split ? 118.5 : 177.5;
  return (
    <ChartSvg width="525" height="198" viewBox="0 0 525 198" role="img" aria-label={head}>
      <g stroke="#7f8894" strokeDasharray="5 4" fill="none">
        {Array.from({ length: 14 }, (_, i) => (
          <path key={i} d={`M${35.5 + 32 * i} 3V177`} />
        ))}
        {grid.map(([y]) => (
          <path key={y} d={`M3 ${y}H484`} />
        ))}
      </g>
      <path d={`M3 ${last[0]}H484`} stroke="#7c8794" />
      {series.candles && <Candles data={series.candles} />}
      {series.bars && <Bars data={series.bars} />}
      {ma && <polyline points={line(ma, 3, head.startsWith("EUR") ? 9 : 11)} fill="none" stroke="#b8322c" />}
      {split === "macd" && (
        <>
          <path d="M3 164.500H484" stroke="#9aa0a8" strokeDasharray="5 4" />
          <g stroke="#c4c4c4">
            {Array.from({ length: 119 }, (_, i) => (
              <path key={i} d={`M${px(i, 4)} 164.500V${py(at(macdTop, (px(i, 4) + 9) * 2.851))}`} />
            ))}
          </g>
          <polyline points={line(macdSignal, 2.851, 9)} fill="none" stroke="#c03434" strokeDasharray="3 2" />
        </>
      )}
      {split === "cci" && (
        <>
          <g stroke="#c8c8c8" strokeDasharray="4 3">
            <path d="M3 146.500H484M3 169.500H484" />
            <path d="M3 158.500H484" stroke="#7c8794" />
          </g>
          <polyline points={line(cci, 2.861, 11)} fill="none" stroke="#4f8f8c" />
        </>
      )}
      {split && <rect x="2" y="119" width="483" height="2" fill="#000" />}
      <g fill="none" stroke="#fff">
        <path d={`M2.500 2.500H484.500V${mainBottom}H2.500z`} />
        {split && <path d="M2.500 121.500H484.500V177.500H2.500z" />}
        {dates.map((d, i) => (
          <path key={d} d={`M${3.5 + 64 * i} 178v3`} />
        ))}
        {grid.map(([y]) => (
          <path key={y} d={`M485 ${y}h3`} />
        ))}
      </g>
      {dates.map((d, i) => (
        <text key={d} className="wide" x={2 + 64 * i} y="190">
          {d}
        </text>
      ))}
      {grid.map(([y, t]) => (
        <text key={y} x="490" y={y + 3.5}>
          {t}
        </text>
      ))}
      {split === "macd" && (
        <>
          <text x="488" y="131">0.00498</text>
          <text x="488" y="168">0.00</text>
          <text x="488" y="174">-0.00147</text>
          <text className="wide" x="7" y="133">MACD(12,26,9) 0.00087 0.00115</text>
        </>
      )}
      {split === "cci" && (
        <>
          <text x="488" y="131">313.489</text>
          <text x="488" y="150">100</text>
          <text x="488" y="162">0.00</text>
          <text x="487" y="174">-100</text>
          <text x="487" y="174">-184.507</text>
          <text className="wide" x="7" y="133">CCI(14) -105.4743</text>
        </>
      )}
      <rect x="486" y={last[0] - 5.5} width="38" height="11" />
      <text x="490" y={last[0] + 3.5} fill="#000">
        {last[1]}
      </text>
      <path d="M6 12.500h8l-4-4z" />
      <text x="18" y="14" xmlSpace="preserve">
        {head}
      </text>
    </ChartSvg>
  );
};

/* ---------- parts ---------- */

type Quote = [string, string, string];

const OneClick = ({ sell, buy, w = 196 }: { sell: Quote; buy: Quote; w?: number }) => (
  <TradePanel $w={w}>
    <TradeTop>
      <Side>SELL</Side>
      <Volume>
        <button aria-label="Less"><Caret fill="#66788e" /></button>
        <input aria-label="Volume" defaultValue="1.00" />
        <button aria-label="More"><Caret dir="up" fill="#66788e" /></button>
      </Volume>
      <Side>BUY</Side>
    </TradeTop>
    <Prices>
      {[sell, buy].map(([a, b, c], i) => (
        <Price key={i} aria-label={i ? "Buy" : "Sell"}>
          <b>{a}</b>
          <strong>{b}</strong>
          <sup>{c}</sup>
        </Price>
      ))}
    </Prices>
  </TradePanel>
);

type Mark = { arrow: string; cx: number; cy: number; rx: number; ry: number };

const Window = ({
  name,
  active,
  mark,
  children,
}: {
  name: string;
  active?: boolean;
  mark?: Mark;
  children: React.ReactNode;
}) => (
  <ChartWindow $active={active} aria-label={name}>
    <WindowHead $active={active}>
      <ChartIcon />
      <h3>{name}</h3>
      <HeadButton aria-label="Minimize" $tone={active ? "blue" : undefined}><MinGlyph /></HeadButton>
      <HeadButton aria-label="Maximize" $tone={active ? "blue" : undefined}><MaxGlyph /></HeadButton>
      <HeadButton aria-label="Close" $tone={active ? "red" : undefined}>
        <CloseGlyph edge={active ? "#7a2a1e" : undefined} />
      </HeadButton>
    </WindowHead>
    <Client>{children}</Client>
    {mark && (
      <Callout width="200" height="50" viewBox="0 0 200 50" fill="none">
        <path d={mark.arrow} stroke="#000" strokeWidth="5" />
        <ellipse cx={mark.cx} cy={mark.cy} rx={mark.rx} ry={mark.ry} stroke="#dd1c24" strokeWidth="4" />
      </Callout>
    )}
  </ChartWindow>
);

const Tabs = ({ items, active, tight, children }: { items: string[]; active: number; tight?: boolean; children?: React.ReactNode }) => (
  <TabStrip $tight={tight} role="tablist">
    {items.map((t, i) => (
      <Tab key={t} role="tab" aria-selected={i === active} $on={i === active}>
        {t}
        {t === "Mailbox" && <sub>7</sub>}
      </Tab>
    ))}
    {children}
  </TabStrip>
);

const quotes: [string, string, string, boolean][] = [
  ["USD...", "0.98...", "0.98...", true],
  ["GBP...", "1.32...", "1.32...", true],
  ["EUR...", "1.10...", "1.10...", true],
  ["USDJPY", "105....", "105....", true],
  ["USD...", "1.30...", "1.30...", true],
  ["AUD...", "0.74...", "0.74...", false],
  ["EUR...", "0.83...", "0.83...", false],
  ["EUR...", "1.47...", "1.47...", true],
  ["EUR...", "1.08...", "1.08...", true],
];

const mails = [
  "Welcome!",
  "The Built-in Virtual Hosting — Robots and Signals Now Working 24/7",
  "Trading Signals and Copy Trading",
  "Mobile Trading — Trade from Anywhere at Any Time!",
];

const dates8 = ["8 Jul 2016", "11 Jul 12:00", "12 Jul 20:00", "14 Jul 04:00", "15 Jul 12:00", "18 Jul 20:00", "20 Jul 04:00", "21 Jul 12:00"];
const dates24 = ["24 Jun 2016", "28 Jun 20:00", "1 Jul 12:00", "6 Jul 04:00", "8 Jul 20:00", "13 Jul 12:00", "18 Jul 04:00", "20 Jul 20:00"];

const Exp = ({ open }: { open?: boolean }) => (
  <Expander aria-label={open ? "Collapse" : "Expand"}>
    <svg width="7" height="7" viewBox="0 0 7 7">
      <path d={open ? "M1 3.500h5" : "M1 3.500h5M3.500 1v5"} stroke="#33507c" />
    </svg>
  </Expander>
);

const Scroll = ({ h }: { h: number }) => (
  <ScrollTrack>
    <Caret dir="up" fill="#444" />
    <Thumb $h={h}><Grooves /></Thumb>
    <Caret fill="#444" />
  </ScrollTrack>
);

export default function App() {
  return (
    <Shell>
      <GlobalStyle />
      <TitleBar>
        <svg width="15" height="20" viewBox="0 0 15 20">
          <rect x="3.500" y="4.500" width="11" height="9" rx="1" fill="#e4f3fa" stroke="#6ba5bf" />
          <path d="M6 10l2-3 2 3 2-3" fill="none" stroke="#5b9ab5" />
          <g transform="translate(-1 6) scale(.75)"><Person c="#5cb04a" /></g>
        </svg>
        <AppTitle>11950920: MetaQuotes-Demo - Demo Account</AppTitle>
        <WindowButtons>
          <WindowButton aria-label="Minimize"><MinGlyph /></WindowButton>
          <WindowButton aria-label="Restore"><RestoreGlyph /></WindowButton>
          <WindowButton aria-label="Close" $close><CloseGlyph edge="#7a3a30" /></WindowButton>
        </WindowButtons>
      </TitleBar>
      <MenuBar>
        <ul>
          {["File", "View", "Insert", "Charts", "Tools", "Window", "Help"].map((m) => (
            <li key={m}><button>{m}</button></li>
          ))}
        </ul>
      </MenuBar>

      <Toolbar>
        <ToolGroup>
          <Grip />
          <ToolButton $wide aria-label="New chart">{icons.newChart}<Caret /></ToolButton>
          <ToolButton $wide aria-label="Profiles">{icons.profiles}<Caret /></ToolButton>
          <Divider />
          <ToolButton $on aria-label="Market watch">{icons.market}</ToolButton>
          <ToolButton aria-label="Data window">{icons.target}</ToolButton>
          <ToolButton $on aria-label="Navigator">{icons.star}</ToolButton>
          <ToolButton $on aria-label="Terminal">{icons.terminal}</ToolButton>
          <ToolButton aria-label="Strategy tester">{icons.tester}</ToolButton>
          <Divider />
          <ToolButton $text>{icons.order}New Order</ToolButton>
          <ToolButton aria-label="MetaEditor">{icons.book}</ToolButton>
          <ToolButton $text>{icons.auto}AutoTrading</ToolButton>
        </ToolGroup>
        <ToolGroup>
          <Grip />
          <ToolButton aria-label="Bar chart">{icons.bars}</ToolButton>
          <ToolButton $on aria-label="Candlesticks">{icons.candles}</ToolButton>
          <ToolButton aria-label="Line chart">{icons.line}</ToolButton>
          <Divider />
          <ToolButton aria-label="Zoom in"><Lens /></ToolButton>
          <ToolButton aria-label="Zoom out"><Lens minus /></ToolButton>
          <ToolButton aria-label="Tile windows">{icons.tile}</ToolButton>
          <Divider />
          <ToolButton $on aria-label="Auto scroll">{icons.scroll}</ToolButton>
          <ToolButton aria-label="Chart shift">{icons.shift}</ToolButton>
          <Divider />
          <ToolButton $wide aria-label="Indicators">{icons.indicators}<Caret /></ToolButton>
          <ToolButton $wide aria-label="Periods">{icons.clock}<Caret /></ToolButton>
          <ToolButton $wide aria-label="Templates">{icons.template}<Caret /></ToolButton>
        </ToolGroup>
        <Tray>
          <button aria-label="Search"><SearchIcon /></button>
          <button aria-label="Chat"><ChatIcon /></button>
        </Tray>
      </Toolbar>
      <Toolbar $last>
        <ToolGroup>
          <Grip />
          <ToolButton $on aria-label="Cursor">{icons.cursor}</ToolButton>
          <ToolButton aria-label="Crosshair">{icons.crosshair}</ToolButton>
          <Divider />
          <ToolButton aria-label="Vertical line">{icons.vline}</ToolButton>
          <ToolButton aria-label="Horizontal line">{icons.hline}</ToolButton>
          <ToolButton aria-label="Trendline">{icons.trend}</ToolButton>
          <ToolButton aria-label="Channel">{icons.channel}</ToolButton>
          <ToolButton aria-label="Fibonacci">{icons.fibo}</ToolButton>
          <LetterButton>A</LetterButton>
          <ToolButton aria-label="Text label">{icons.label}</ToolButton>
          <ToolButton $wide aria-label="Arrows">{icons.arrows}<Caret /></ToolButton>
        </ToolGroup>
        <ToolGroup>
          <Grip />
          {["M1", "M5", "M15", "M30", "H1", "H4", "D1", "W1", "MN"].map((t) => (
            <FrameButton key={t} $on={t === "H4"}>{t}</FrameButton>
          ))}
        </ToolGroup>
      </Toolbar>

      <Body>
        <Dock>
          <Panel>
            <PanelTitle>
              <h2>Market Watch: 22:26:16</h2>
              <button aria-label="Close market watch"><Cross /></button>
            </PanelTitle>
            <PanelBody>
              <Quotes>
                <colgroup><col width="70" /><col width="46" /><col width="47" /></colgroup>
                <thead>
                  <tr><th>Symbol</th><th>Bid</th><th>Ask</th></tr>
                </thead>
                <tbody>
                  {quotes.map(([s, b, a, up], i) => (
                    <QuoteRow key={i} $up={up}>
                      <td><span><QuoteArrow up={up} />{s}</span></td>
                      <td>{b}</td>
                      <td>{a}</td>
                    </QuoteRow>
                  ))}
                </tbody>
              </Quotes>
              <Scroll h={64} />
            </PanelBody>
            <Tabs items={["Symbols", "Tick Chart"]} active={0} />
          </Panel>
          <Panel $fill>
            <PanelTitle>
              <h2>Navigator</h2>
              <button aria-label="Close navigator"><Cross /></button>
            </PanelTitle>
            <PanelBody>
              <Tree>
                <li><ChartIcon />MetaTrader 4</li>
                <li><Branch $w={18}><Exp open /><i /></Branch>
                  <TreeGlyph><Person c="#3fb54a" /><Person c="#d9b23c" x={5} /></TreeGlyph>Accounts</li>
                <li><Branch $w={38}><Exp open /><i /></Branch>
                  <TreeGlyph>
                    <path d="M3.500 3.500l7-2v13l-7 1.500z" fill="#4aaedc" stroke="#1f6f9c" />
                    <path d="M10.500 1.500l3 2v11l-3 .5z" fill="#2a86b8" stroke="#1f6f9c" />
                    <path d="M5 6l4-1M5 8.500l4-1M5 11l4-1" stroke="#fff" />
                  </TreeGlyph>MetaQuotes-Demo</li>
                <li><Branch $w={57}><i className="long" /></Branch>
                  <TreeGlyph><Person c="#3cc03c" x={2} /></TreeGlyph>11950920: Nama</li>
                <li><Branch $w={18}><Exp /><i /></Branch>
                  <TreeGlyph>
                    <rect x="1.500" y="1.500" width="14" height="13" rx="1" fill="#fbe28c" stroke="#b58f2c" />
                    <path d="M11 4q-2-1-2.500 2l-1 5q-.5 2-2 1.500M6.500 7.500h4" stroke="#7a5c10" strokeWidth="1.200" />
                  </TreeGlyph>Indicators</li>
                <li><Branch $w={18}><Exp /><i /></Branch>
                  <TreeGlyph>
                    <Advisor />
                    <path d="M13 9l3 3-3 3-3-3z" fill="#f5cf52" stroke="#9c7414" strokeWidth=".8" />
                  </TreeGlyph>Expert Advisors</li>
                <li><Branch $w={18}><Exp /><i /></Branch>
                  <TreeGlyph>
                    <path d="M2 1.500h11v3h-2v8h2v3H3.500v-3h2v-8H2z" fill="#f8e08c" stroke="#a8862c" />
                    <path d="M13 9l3 3-3 3-3-3z" fill="#f5cf52" stroke="#9c7414" strokeWidth=".8" />
                  </TreeGlyph>Scripts</li>
              </Tree>
            </PanelBody>
            <Tabs items={["Common", "Favorites"]} active={0} />
          </Panel>
        </Dock>

        <Workspace>
          <WindowGrid>
            <Window name="EURUSD,H4" active>
              <Chart
                head="EURUSD,H4  1.10098 1.10227 1.10015 1.10199"
                dates={dates8}
                grid={[[9.5, "1.11680"], [42.5, "1.11290"], [75.5, "1.10910"], [108.5, "1.10530"], [141.5, "1.10140"], [174.5, "1.09760"]]}
                last={[136.5, "1.10199"]}
                series={{ candles: eurusd }}
                ma={eurMa}
              />
              <OneClick sell={["1.10", "19", "9"]} buy={["1.10", "21", "7"]} />
            </Window>
            <Window
              name="GBPUSD,H4"
              mark={{ arrow: "M45 0H84V-10L122 12L84 32V23H45Z", cx: 175, cy: 20, rx: 27, ry: 23 }}
            >
              <Chart
                head="GBPUSD,H4  1.32114 1.32143 1.31890 1.32058"
                dates={dates24}
                grid={[[9.5, "1.46225"], [42.5, "1.42550"], [75.5, "1.38875"], [108.5, "1.35200"], [141.5, "1.31525"], [174.5, "1.27955"]]}
                last={[137.5, "1.32058"]}
                series={{ bars: gbpusd }}
                ma={gbpMa}
              />
              <OneClick sell={["1.32", "05", "8"]} buy={["1.32", "08", "1"]} />
            </Window>
            <Window
              name="USDCHF,H4"
              mark={{ arrow: "M29 8H75V-3L120 19L75 37V30H29Z", cx: 172, cy: 17, rx: 27, ry: 20 }}
            >
              <Chart
                head="USDCHF,H4  0.98714 0.98737 0.98560 0.98597"
                dates={dates24}
                grid={[[16.5, "0.98845"], [49.5, "0.97870"], [82.5, "0.96920"], [115.5, "0.95945"]]}
                last={[25.5, "0.98597"]}
                series={{ bars: usdchf }}
                split="macd"
              />
              <OneClick sell={["0.98", "59", "7"]} buy={["0.98", "62", "2"]} />
            </Window>
            <Window
              name="USDJPY,H4"
              mark={{ arrow: "M60 11H104V2L145 21L104 35V30H60Z", cx: 181, cy: 20, rx: 27, ry: 24 }}
            >
              <Chart
                head="USDJPY,H4  105.779 105.970 105.646 105.669"
                dates={dates8}
                grid={[[16.5, "107.005"], [49.5, "104.730"], [82.5, "102.455"], [115.5, "100.245"]]}
                last={[35.5, "105.669"]}
                series={{ candles: usdjpy }}
                split="cci"
              />
              <OneClick sell={["105", "66", "9"]} buy={["105", "69", "1"]} w={190} />
            </Window>
          </WindowGrid>
          <Watermark>gurubelajarforex.blogspot.com</Watermark>
          <Tabs items={["EURUSD,H4", "USDCHF,H4", "GBPUSD,H4", "USDJPY,H4"]} active={0}>
            <ScrollArrows><Caret dir="left" fill="#888" /><Caret dir="right" fill="#888" /></ScrollArrows>
          </Tabs>
        </Workspace>
      </Body>

      <Terminal>
        <TerminalSide>
          <button aria-label="Close terminal"><Cross /></button>
          <h2>Terminal</h2>
        </TerminalSide>
        <TerminalMain>
          <MailArea>
            <Mail>
              <colgroup><col /><col width="432" /><col width="132" /></colgroup>
              <thead>
                <tr><th>Headline</th><th>From</th><th>Time</th></tr>
              </thead>
              <tbody>
                {mails.map((m) => (
                  <tr key={m}>
                    <td><span><Envelope />{m}</span></td>
                    <td>MetaQuotes Software Corp.</td>
                    <td>2016.07.22 02:05</td>
                  </tr>
                ))}
              </tbody>
            </Mail>
            <Scroll h={40} />
          </MailArea>
          <Tabs
            tight
            items={["Trade", "Exposure", "Account History", "News", "Alerts", "Mailbox", "Company", "Market", "Signals", "Code Base", "Experts", "Journal"]}
            active={5}
          />
        </TerminalMain>
      </Terminal>

      <Status>
        <StatusCell>Mail list page</StatusCell>
        <StatusCell $w={116}>Default</StatusCell>
        <StatusCell $w={74} />
        <StatusCell $w={99} />
        <StatusCell $w={71} />
        <StatusCell $w={68} />
        <StatusCell $w={70} />
        <StatusCell $w={66} />
        <StatusCell $w={130}>
          <svg width="24" height="12" viewBox="0 0 24 12">
            {Array.from({ length: 8 }, (_, i) => (
              <path key={i} d={`M${i * 3 + 1} 0v12`} stroke={i > 5 ? "#b03020" : "#3a8a20"} strokeWidth="2" />
            ))}
          </svg>
          791/2 kb
        </StatusCell>
      </Status>
    </Shell>
  );
}
